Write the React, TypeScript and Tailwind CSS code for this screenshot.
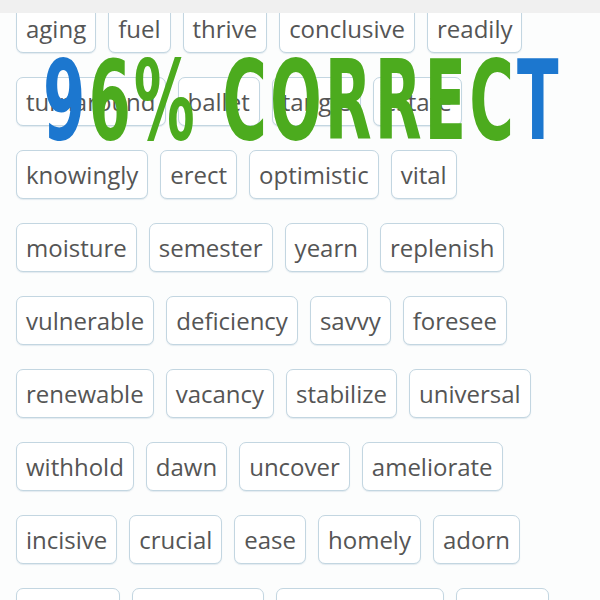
import React from "react";

const rows: string[][] = [
  ["aging", "fuel", "thrive", "conclusive", "readily"],
  ["turnaround", "ballet", "tangle", "estate"],
  ["knowingly", "erect", "optimistic", "vital"],
  ["moisture", "semester", "yearn", "replenish"],
  ["vulnerable", "deficiency", "savvy", "foresee"],
  ["renewable", "vacancy", "stabilize", "universal"],
  ["withhold", "dawn", "uncover", "ameliorate"],
  ["incisive", "crucial", "ease", "homely", "adorn"],
  ["scarcity", "persevere", "consequence", "hinder"],
];

function Chip({ word }: { word: string }) {
  return (
    <div className="h-[49px] px-[9px] flex items-center rounded-[7px] border-[1.5px] border-[#c3d6e1] bg-white text-[24px] leading-none text-[#555] shadow-[0_1px_1px_rgba(150,180,200,0.25)]">
      {word}
    </div>
  );
}

export default function App() {
  return (
    <div
      className="relative w-[600px] h-[600px] overflow-hidden bg-[#fcfdfd]"
      style={{ fontFamily: '"Open Sans", "Noto Sans", sans-serif' }}
    >
      <div className="pt-[4px] pl-[16px] flex flex-col gap-[24px]">
        {rows.map((r, i) => (
          <div key={i} className="flex gap-[12px]">
            {r.map((w) => (
              <Chip key={w} word={w} />
            ))}
          </div>
        ))}
      </div>
      <div className="absolute top-0 left-0 w-[600px] h-[13px] bg-[#f0f0f0]" />
      <div
        className="absolute left-[43px] top-[39px] origin-left scale-x-[0.615] whitespace-nowrap font-bold text-[110px] leading-[124px] tracking-[5px]"
        style={{ fontFamily: '"DejaVu Sans Condensed", "DejaVu Sans", sans-serif' }}
      >
        <span className="text-[#1c77cf]">9</span>
        <span className="text-[#4cab1e]">6% CORREC</span>
        <span className="text-[#1c77cf]">T</span>
      </div>
    </div>
  );
}
